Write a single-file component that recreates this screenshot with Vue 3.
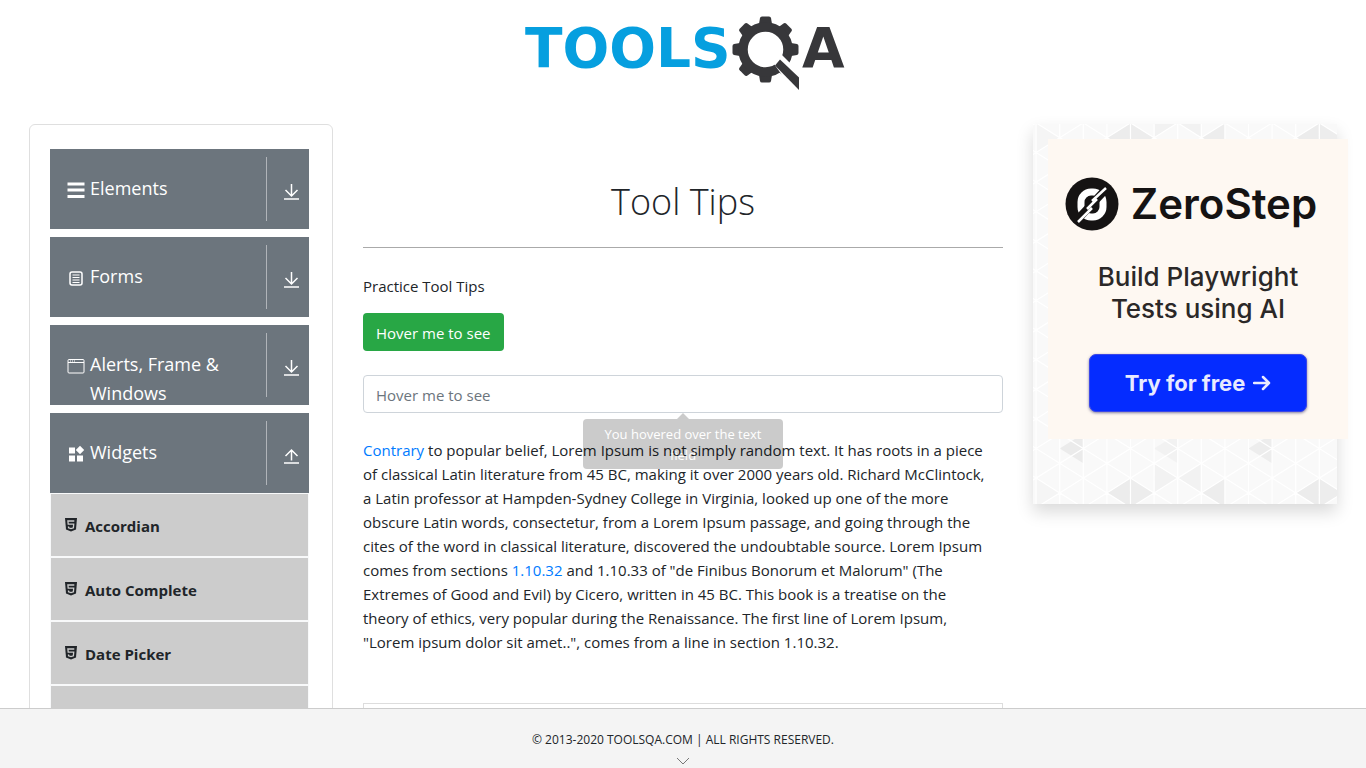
<script setup>
import { ref } from 'vue'

const groups = ref([
  { name: 'Elements', icon: 'menu', open: false, items: [] },
  { name: 'Forms', icon: 'form', open: false, items: [] },
  { name: 'Alerts, Frame & Windows', icon: 'window', open: false, items: [] },
  {
    name: 'Widgets',
    icon: 'widgets',
    open: true,
    items: ['Accordian', 'Auto Complete', 'Date Picker', 'Slider']
  }
])

const teeth = [0, 45, 90, 135, 180, 225, 270, 315]

// Triangular lattice behind the advertisement
const stepX = 23.6
const stepY = 29.6
const lattice = []
for (let col = -1; col < 13; col++) {
  const x = 3.1 + col * stepX
  const first = (col % 2 === 0 ? 28.5 : 13.7) - 2 * stepY
  for (let row = 0; row < 15; row++) {
    const y = first + row * stepY
    lattice.push(`M${x} ${y}v${stepY}l${stepX} ${-stepY / 2}z`)
  }
}
const latticePath = lattice.join('')

const left = (x, y) => `M${x} ${y}v29.6l-23.6-14.8z`
const right = (x, y) => `M${x} ${y}v29.6l23.6-14.8z`
const shades = []
for (const top of [-1, 354.1]) {
  for (const x of [97.5, 286.3]) {
    shades.push({ d: left(x, top), c: '#ececec' }, { d: right(x, top), c: '#ededed' })
  }
  shades.push({ d: left(191.9, top), c: '#ededed' })
  shades.push({ d: right(121.1, top - 14.8), c: '#f2f2f2' }, { d: left(168.3, top - 14.8), c: '#f2f2f2' })
  shades.push({ d: left(50.3, top - 44.4), c: '#ebebeb' }, { d: left(239.1, top - 44.4), c: '#ededed' })
  shades.push({ d: left(144.7, top - 44.4), c: '#f2f2f2' }, { d: right(3.1, top), c: '#f5f5f5' })
}
</script>

<template>
  <div class="page">
    <div class="body">
      <header class="top">
        <a href="#" class="logo" aria-label="ToolsQA">
          <svg width="324" height="80" viewBox="0 0 324 80">
            <text class="logo-word" x="0" y="53" fill="#069fdf">TOOLS</text>
            <g fill="#37373a">
              <path
                v-for="angle in teeth"
                :key="angle"
                d="M234 10l1-6q.3-1.500 2-1.500h7q1.700 0 2 1.500l1 6z"
                :transform="`rotate(${angle} 240.500 35.500)`"
              />
            </g>
            <circle cx="240.500" cy="35.500" r="22.500" fill="none" stroke="#37373a" stroke-width="9.500" />
            <path d="M247 47l8-8 26 26-10 16z" fill="#fff" />
            <path d="M250 51.500l5-6 19 18V76z" fill="#37373a" />
            <text class="logo-word" x="277" y="53" fill="#37373a">A</text>
          </svg>
        </a>
      </header>

      <div class="columns">
        <nav class="side">
          <section v-for="group in groups" :key="group.name" class="group">
            <button type="button" class="group-head" :aria-expanded="group.open" @click="group.open = !group.open">
              <span class="group-icon">
                <svg width="18" height="18" viewBox="0 0 18 18" fill="none" stroke="#fff">
                  <path v-if="group.icon === 'menu'" d="M0.500 3h17M0.500 9h17M0.500 15.500h17" stroke-width="3" />
                  <g v-else-if="group.icon === 'form'">
                    <rect x="3" y="3" width="12" height="13" rx="2" stroke-width="1.500" />
                    <path d="M5.500 6h7M5.500 8.500h7M5.500 11h7M5.500 13.500h7" stroke-width="1" />
                  </g>
                  <g v-else-if="group.icon === 'window'">
                    <rect x="1" y="2.500" width="16" height="13.500" rx="1" />
                    <path d="M1 5.500h16" />
                    <path d="M3 4h5" stroke-dasharray="1 1" />
                  </g>
                  <path
                    v-else
                    d="M2 2.500h6v6H2zM2 10.500h6v6H2zM10 10.500h6v6h-6zM13 .8l4.200 4.200L13 9.200 8.800 5z"
                    fill="#fff"
                    stroke="none"
                  />
                </svg>
              </span>
              <span class="group-name">{{ group.name }}</span>
              <span class="group-toggle">
                <svg width="16" height="16" viewBox="0 0 16 16" fill="none" stroke="#fff" stroke-width="1.500">
                  <path v-if="group.open" d="M7.500 12.500V2M1.500 8l6-6 6 6" />
                  <path v-else d="M7.500 0v11.500M1.500 6l6 6 6-6" />
                  <path d="M0 15h15" />
                </svg>
              </span>
            </button>
            <ul v-if="group.open" class="items">
              <li v-for="item in group.items" :key="item">
                <a href="#" class="item">
                  <svg width="12" height="14" viewBox="0 0 12 14">
                    <path d="M0 0h12l-1 11.500L6 13.500l-5-2z" fill="#212529" />
                    <path d="M9.300 3H2.900l.3 3.200h5.500L8.400 9.800 6 10.600l-2.400-.8-.1-1.300" fill="none" stroke="#ccc" stroke-width="1.300" />
                  </svg>
                  <span>{{ item }}</span>
                </a>
              </li>
            </ul>
          </section>
        </nav>

        <main class="content">
          <h1>Tool Tips</h1>
          <p class="intro">Practice Tool Tips</p>
          <button type="button" class="hover-button">Hover me to see</button>
          <div class="field">
            <input type="text" placeholder="Hover me to see" aria-label="Hover me to see" aria-describedby="field-tip" />
            <div id="field-tip" class="tooltip" role="tooltip">You hovered over the text field</div>
          </div>
          <p class="copy">
            <a href="#">Contrary</a> to popular belief, Lorem Ipsum is not simply random text. It has roots in a piece<br />
            of classical Latin literature from 45 BC, making it over 2000 years old. Richard McClintock,<br />
            a Latin professor at Hampden-Sydney College in Virginia, looked up one of the more<br />
            obscure Latin words, consectetur, from a Lorem Ipsum passage, and going through the<br />
            cites of the word in classical literature, discovered the undoubtable source. Lorem Ipsum<br />
            comes from sections <a href="#">1.10.32</a> and 1.10.33 of "de Finibus Bonorum et Malorum" (The<br />
            Extremes of Good and Evil) by Cicero, written in 45 BC. This book is a treatise on the<br />
            theory of ethics, very popular during the Renaissance. The first line of Lorem Ipsum,<br />
            "Lorem ipsum dolor sit amet..", comes from a line in section 1.10.32.
          </p>
          <div class="banner"></div>
        </main>

        <aside class="ad-box">
          <svg class="ad-pattern" width="100%" height="100%" aria-hidden="true">
            <path v-for="(s, i) in shades" :key="i" :d="s.d" :fill="s.c" />
            <path :d="latticePath" fill="none" stroke="#fff" stroke-width="1.200" />
          </svg>
          <a href="#" class="ad">
            <span class="ad-brand">
              <svg width="54" height="54" viewBox="0 0 54 54" fill="none">
                <circle cx="27" cy="27" r="26.500" fill="#151313" />
                <rect x="16" y="15" width="22" height="25" rx="10" stroke="#fff" stroke-width="7" />
                <path d="M12 43L42 11" stroke="#151313" stroke-width="8" />
                <path d="M13 45L27 31M27 24L41 11M22 32L32 22" stroke="#fff" stroke-width="2.500" />
              </svg>
              <span>ZeroStep</span>
            </span>
            <span class="ad-text">Build Playwright<br />Tests using AI</span>
            <span class="ad-action">
              Try for free
              <svg width="18" height="16" viewBox="0 0 18 16" fill="none" stroke="#e8eaff" stroke-width="2.500">
                <path d="M1 8h15M10 2l6 6-6 6" stroke-linecap="round" stroke-linejoin="round" />
              </svg>
            </span>
          </a>
        </aside>
      </div>
    </div>

    <footer class="footer">
      <span>© 2013-2020 TOOLSQA.COM | ALL RIGHTS RESERVED.</span>
      <svg width="14" height="8" viewBox="0 0 14 8" fill="none" stroke="#777">
        <path d="M1 1l6 6 6-6" />
      </svg>
    </footer>
  </div>
</template>

<style>
body {
  margin: 0;
  background: #fff;
}
</style>

<style scoped>
* {
  box-sizing: border-box;
}
.page {
  display: flex;
  flex-direction: column;
  height: 100vh;
  overflow: hidden;
  font-family: "Open Sans", "Noto Sans", sans-serif;
  font-size: 15px;
  line-height: 24px;
  color: #212529;
}
.page a {
  text-decoration: none;
}
.body {
  flex: 1;
  min-height: 0;
  overflow: hidden;
}
.top {
  display: flex;
  justify-content: center;
  padding: 14px 0 30px 8px;
}
.logo svg,
.ad svg,
.footer svg {
  display: block;
}
.logo-word {
  font-family: "DejaVu Sans", sans-serif;
  font-size: 55px;
  font-weight: 700;
}
.columns {
  display: grid;
  grid-template-columns: minmax(0, 19fr) minmax(0, 40fr) minmax(0, 19fr);
  align-items: start;
  gap: 30px;
  padding: 0 29px;
}
.side {
  padding: 24px 23px 24px 20px;
  border: 1px solid #dfdfdf;
  border-radius: 6px;
}
.group {
  margin-bottom: 8px;
}
.group-head {
  display: flex;
  width: 100%;
  height: 80px;
  padding: 8px 0 0 17px;
  overflow: hidden;
  border: 0;
  background: #6c757d;
  color: #fff;
  font-family: inherit;
  font-size: 18px;
  line-height: 29px;
  text-align: left;
  cursor: pointer;
}
.group-icon {
  flex: none;
  width: 23px;
  padding-top: 24px;
}
.group-icon svg,
.group-toggle svg {
  display: block;
}
.group-name {
  flex: 1;
  padding-top: 17px;
}
.group-toggle {
  flex: none;
  width: 43px;
  height: 64px;
  padding: 27px 0 0 17px;
  border-left: 1px solid #b0b4b9;
}
.items {
  margin: 0;
  padding: 0;
  list-style: none;
}
.item {
  display: flex;
  align-items: center;
  gap: 8px;
  height: 64px;
  padding: 2px 14px 0;
  border: 1px solid #f8f9fa;
  background: #ccc;
  color: #212529;
  font-weight: 700;
}
.item svg {
  margin-bottom: 2px;
}
.content h1 {
  margin: 48px 0 24px;
  padding-bottom: 16px;
  border-bottom: 1px solid #aaa;
  font-size: 36px;
  font-weight: 300;
  line-height: 59px;
  text-align: center;
}
.intro {
  margin: 0 0 15px;
  padding-top: 2px;
}
.hover-button {
  display: block;
  height: 38px;
  padding: 1px 13px 0;
  border: 0;
  border-radius: 4px;
  background: #28a745;
  color: #fff;
  font: inherit;
}
.field {
  position: relative;
  margin: 24px 0 25px;
}
.field input {
  display: block;
  width: 100%;
  height: 38px;
  padding: 1px 12px 0;
  border: 1px solid #ced4da;
  border-radius: 4px;
  font: inherit;
}
.field input::placeholder {
  color: #6c757d;
  opacity: 1;
}
.tooltip {
  position: absolute;
  z-index: 1;
  top: calc(100% + 6px);
  left: calc(50% - 100px);
  width: 200px;
  padding: 5px 16px 3px;
  border-radius: 4px;
  background: #000;
  color: #fff;
  font-size: 13px;
  line-height: 21px;
  text-align: center;
  opacity: 0.2;
}
.tooltip::before {
  content: "";
  position: absolute;
  bottom: 100%;
  left: calc(50% - 6px);
  border: 6px solid transparent;
  border-top: 0;
  border-bottom-color: #000;
}
.copy {
  margin: 0 0 49px;
}
.copy a {
  color: #007bff;
}
.banner {
  height: 90px;
  border: 1px solid #ddd;
}
.ad-box {
  position: relative;
  height: 380px;
  padding: 15px;
  background: #f9f9f9;
  box-shadow: 0 8px 16px rgba(0, 0, 0, 0.15);
}
.ad-pattern {
  position: absolute;
  inset: 0;
}
.ad {
  position: relative;
  display: flex;
  flex-direction: column;
  align-items: center;
  width: 300px;
  height: 300px;
  padding-top: 38px;
  background: #fef8f2;
  color: #151313;
  font-family: Inter, sans-serif;
}
.ad-brand {
  display: flex;
  align-items: center;
  gap: 12px;
  margin-right: 14px;
  font-size: 42px;
  font-weight: 600;
  line-height: 54px;
}
.ad-text {
  margin: 30px 0 29px;
  color: #2b2828;
  font-size: 26px;
  font-weight: 500;
  line-height: 32px;
  text-align: center;
}
.ad-action {
  display: flex;
  align-items: center;
  justify-content: center;
  gap: 8px;
  width: 218px;
  height: 58px;
  border: 1px solid #3a46e8;
  border-radius: 7px;
  background: #052cff;
  box-shadow: 0 1px 3px rgba(0, 0, 80, 0.5);
  color: #e8eaff;
  font-size: 22px;
  font-weight: 700;
}
.footer {
  display: flex;
  flex: none;
  flex-direction: column;
  align-items: center;
  gap: 5px;
  height: 60px;
  padding-top: 19px;
  border-top: 1px solid #ccc;
  background: #f4f4f4;
  font-size: 12px;
}
</style>
